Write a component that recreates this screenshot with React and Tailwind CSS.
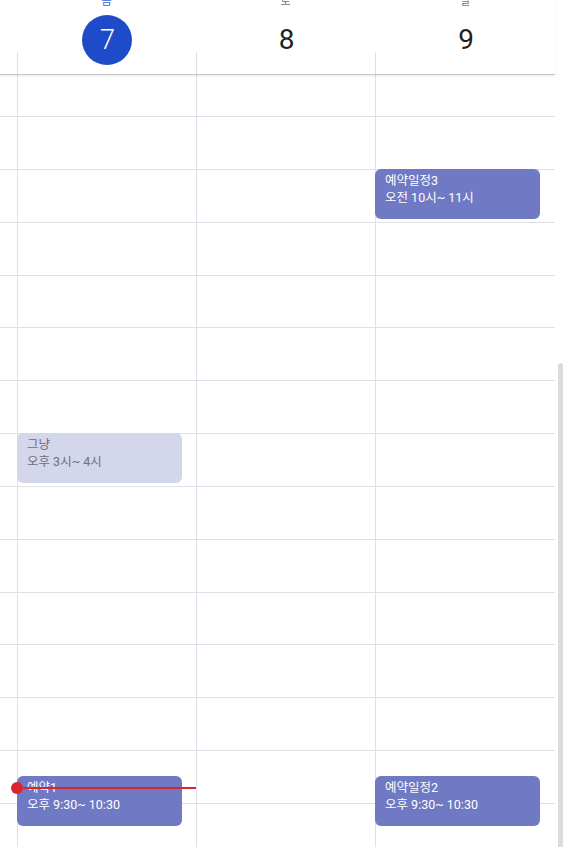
import React from 'react';

const days = [
  { name: '금', date: 7, today: true },
  { name: '토', date: 8 },
  { name: '일', date: 9 },
];

// events per column, top is measured from the body start
const events = [
  [
    { title: '그냥', time: '오후 3시~ 4시', top: 358, light: true },
    { title: '예약1', time: '오후 9:30~ 10:30', top: 701 },
  ],
  [],
  [
    { title: '예약일정3', time: '오전 10시~ 11시', top: 94 },
    { title: '예약일정2', time: '오후 9:30~ 10:30', top: 701 },
  ],
];

const Rows = () => (
  <>
    <div className="h-[42px] border-b border-[#dde1e7]" />
    {Array.from({ length: 14 }).map((_, i) => (
      <div key={i} className="h-[52.85px] border-b border-[#dde1e7]" />
    ))}
  </>
);

const EventCard = ({ ev }) => (
  <div
    className={`absolute left-[-1px] w-[165px] h-[50px] rounded-[6px] px-[10px] pt-[3px] text-[12.5px] leading-[17px] ${
      ev.light ? 'bg-[#d4d6ec] text-[#6e6f80]' : 'bg-[#7079c3] text-white'
    }`}
    style={{ top: ev.top }}
  >
    <div>{ev.title}</div>
    <div>{ev.time}</div>
  </div>
);

export default function App() {
  return (
    <div className="relative h-[847px] w-[563px] overflow-hidden bg-white font-['Roboto','Noto_Sans_CJK_KR',sans-serif]">
      <div className="w-[555px]">
        {/* Header */}
        <div className="flex h-[75px] border-b border-[#c6c6c6] shadow-[0_1px_2px_rgba(0,0,0,0.08)] relative z-10 bg-white">
          <div className="w-[17px] shrink-0" />
          {days.map((d, i) => (
            <div
              key={d.date}
              className={`relative flex flex-col items-center ${i === 2 ? 'w-[180px]' : 'w-[179px]'} before:absolute before:left-0 before:bottom-0 before:h-[22px] before:border-l before:border-[#dde1e7] before:content-['']`}
            >
              <div
                className={`mt-[-5px] h-[14px] text-[11px] leading-[14px] ${
                  d.today ? 'text-[#3b5fd0]' : 'text-[#70757a]'
                }`}
              >
                {d.name}
              </div>
              {d.today ? (
                <div className="mt-[6px] flex h-[50px] w-[50px] items-center justify-center rounded-full bg-[#1e4bc7] pl-[2px] text-[27px] font-light text-white">
                  {d.date}
                </div>
              ) : (
                <div className="mt-[6px] flex h-[50px] w-[50px] items-center justify-center pl-[2px] text-[28px] text-[#1f1f1f]">
                  {d.date}
                </div>
              )}
            </div>
          ))}
        </div>

        {/* Body */}
        <div className="flex">
          <div className="w-[17px] shrink-0">
            <Rows />
          </div>
          {days.map((d, i) => (
            <div
              key={d.date}
              className={`relative border-l border-[#dde1e7] ${i === 2 ? 'w-[180px]' : 'w-[179px]'}`}
            >
              <Rows />
              {events[i].map((ev) => (
                <EventCard key={ev.title} ev={ev} />
              ))}
              {i === 0 && (
                <>
                  <div className="absolute left-0 right-0 top-[712px] h-[2px] bg-[#d9262c]" />
                  <div className="absolute left-[-7px] top-[707px] h-[12px] w-[12px] rounded-full bg-[#d9262c]" />
                </>
              )}
            </div>
          ))}
        </div>
      </div>

      {/* scrollbar thumb */}
      <div className="absolute right-0 top-[363px] bottom-0 w-[5px] rounded-t-[3px] bg-[#dcdcdc]" />
    </div>
  );
}
